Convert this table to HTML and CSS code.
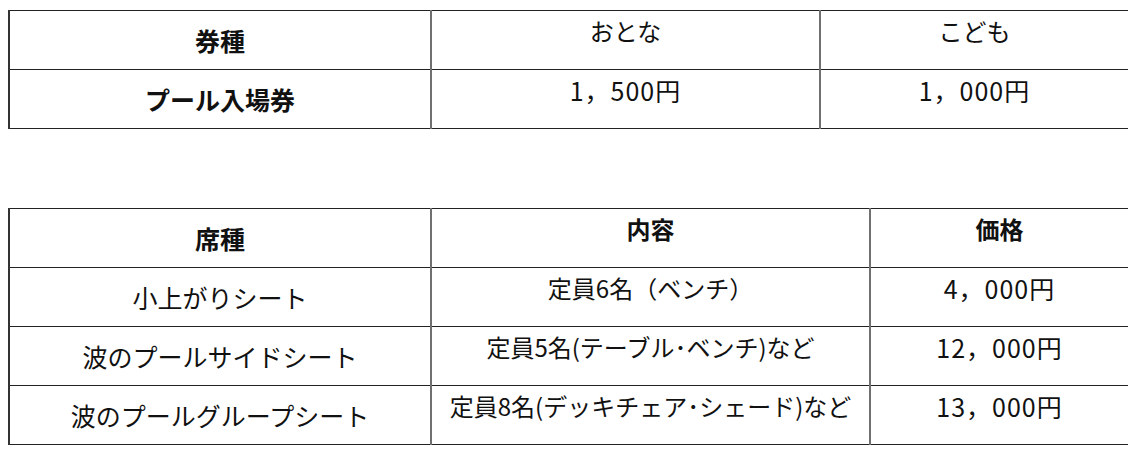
FILE: index.html
```html
<!DOCTYPE html>
<html lang="ja">
<head>
<meta charset="utf-8">
<title>料金表</title>
<link rel="stylesheet" href="styles.css">
</head>
<body>
<table class="price-table first">
  <colgroup>
    <col class="c1a"><col class="c2a"><col class="c3a">
  </colgroup>
  <tr>
    <td class="label bold">券種</td>
    <td class="val">おとな</td>
    <td class="val">こども</td>
  </tr>
  <tr>
    <td class="label bold">プール入場券</td>
    <td class="val price">1，500円</td>
    <td class="val price">1，000円</td>
  </tr>
</table>

<table class="price-table second">
  <colgroup>
    <col class="c1b"><col class="c2b"><col class="c3b">
  </colgroup>
  <tr>
    <td class="label bold">席種</td>
    <td class="val bold">内容</td>
    <td class="val bold">価格</td>
  </tr>
  <tr>
    <td class="label">小上がりシート</td>
    <td class="val">定員6名（ベンチ）</td>
    <td class="val price">4，000円</td>
  </tr>
  <tr>
    <td class="label">波のプールサイドシート</td>
    <td class="val">定員5名(テーブル･ベンチ)など</td>
    <td class="val price">12，000円</td>
  </tr>
  <tr>
    <td class="label">波のプールグループシート</td>
    <td class="val">定員8名(デッキチェア･シェード)など</td>
    <td class="val price">13，000円</td>
  </tr>
</table>
</body>
</html>
```
FILE: styles.css
```css
html, body {
  background: #ffffff;
}
body {
  margin: 8px;
  font-family: "Noto Sans CJK JP", "Noto Sans", sans-serif;
  color: #111111;
}
.price-table {
  width: 1120px;
  border-collapse: collapse;
  table-layout: fixed;
  font-size: 24px;
}
.first {
  margin-top: 2px;
}
.second {
  margin-top: 79px;
}
.c1a, .c1b { width: 422px; }
.c2a { width: 389px; }
.c3a { width: 309px; }
.c2b { width: 439px; }
.c3b { width: 259px; }
.price-table tr {
  height: 59px;
}
.price-table td {
  border-top: 1px solid #222222;
  border-bottom: 1px solid #222222;
  border-left: 2px solid #707070;
  border-right: 2px solid #707070;
  text-align: center;
  padding: 0 4px;
  line-height: 34px;
  white-space: nowrap;
}
.price-table td:first-child {
  border-left-color: #333333;
}
.label {
  vertical-align: middle;
  font-size: 25px;
}
.val {
  vertical-align: top;
  padding-top: 3px !important;
}
.price {
  font-size: 25px;
  letter-spacing: 1px;
}
.bold {
  font-weight: 700;
}
```
